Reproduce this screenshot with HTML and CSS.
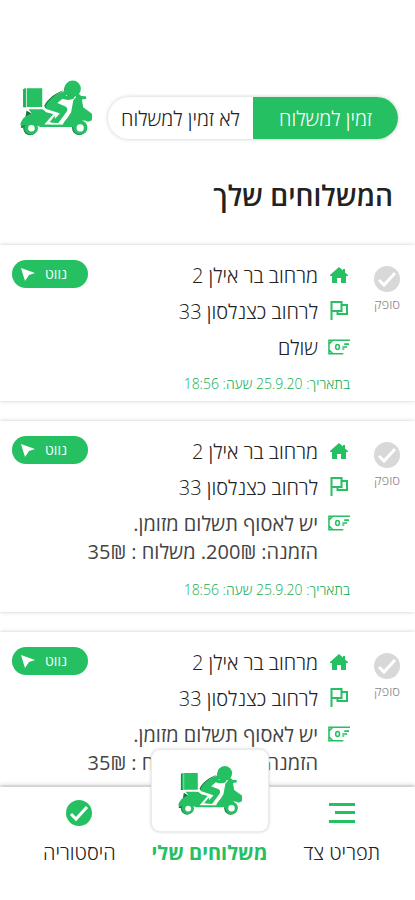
FILE: index.html
```html
<!DOCTYPE html>
<html lang="he" dir="rtl">
<head>
<meta charset="utf-8">
<meta name="viewport" content="width=device-width, initial-scale=1">
<title>המשלוחים שלך</title>
<link rel="stylesheet" href="styles.css">
</head>
<body>
<svg class="sprite" aria-hidden="true">
  <symbol id="scooter" viewBox="54 40 220 172">
    <g class="scooter-shadow">
      <path d="M64 68h8v56h-8zM74 134l15 9-26 22-7 21h9z"/>
      <path d="M188 72c-24 8-48 24-60 47l4 9 30-40z"/>
      <circle cx="212" cy="69" r="23"/><circle cx="85" cy="188" r="21"/><circle cx="235" cy="187" r="22"/>
    </g>
    <path d="M67 66h6v56h-6zM75 66h47v57H75z"/>
    <circle cx="215" cy="67" r="25"/>
    <path d="M80 130h44l10 9 24 6 4 16-16 15h38l26-36 7-38 8-9-2-10 8-3 10 9 14 1 2 8-14 2 4 24 28 20 5 17-18 7c-15-9-29-1-34 12l-7 4H116l-28-13-30 11-3-5c3-15 13-27 35-34z"/>
    <circle cx="88" cy="187" r="21"/><circle cx="238" cy="186" r="22"/>
    <g class="scooter-hole"><circle cx="89" cy="188" r="10"/><circle cx="238" cy="187" r="11"/></g>
    <path class="scooter-gap" d="M122 126l40 17-26 30h50"/>
    <path class="scooter-hole" d="M205 126l5 2-8 24-19 21h-11l25-31z"/>
    <path d="M193 73c-25 7-49 22-62 48l3 8 34 11 8 3-27 28 22 1 26-35c4-7 1-14-7-17l-22-9 16-13c12 5 25 4 36-2l-2-8-24 1 9-16z"/>
  </symbol>
  <symbol id="check" viewBox="0 0 26 26">
    <circle cx="13" cy="13" r="13"/>
    <path class="check-mark" d="M5 14l5 5 11-12"/>
  </symbol>
  <symbol id="home" viewBox="0 0 18 16">
    <path d="M9 0l4 3.500V2h2v3.500L18 8v1h-2v7h-5v-5H7v5H2V9H0V8z"/>
  </symbol>
  <symbol id="flag" viewBox="0 0 18 19">
    <path class="line" d="M1.500 19V1h10v9h-10M12 4h5v9H7.500v-3"/>
  </symbol>
  <symbol id="cash" viewBox="0 0 23 16">
    <path class="line thin" d="M23 1H1v14h15M1 5l4-4M1 11l4 4M17 5h5M15 8h5M15 10h2"/>
    <ellipse class="line thin" cx="10" cy="8" rx="2" ry="2.500"/>
  </symbol>
  <symbol id="pointer" viewBox="0 0 15 15">
    <path d="M0 1l14 5-6 2-4 6z"/>
  </symbol>
  <symbol id="menu" viewBox="0 0 26 20">
    <path d="M0 0h26v3H0zM6 8h20v3H6zM0 17h26v3H0z"/>
  </symbol>
</svg>

<div class="app">
  <header class="top">
    <div class="toggle" role="radiogroup" aria-label="זמינות">
      <label class="option"><input type="radio" name="available" checked><span>זמין למשלוח</span></label>
      <label class="option"><input type="radio" name="available"><span>לא זמין למשלוח</span></label>
    </div>
    <svg class="logo" aria-hidden="true"><use href="#scooter"/></svg>
  </header>

  <main class="content">
    <h1>המשלוחים שלך</h1>

    <article class="card">
      <button class="status" type="button"><svg aria-hidden="true"><use href="#check"/></svg>סופק</button>
      <div class="details">
        <div class="row"><svg class="home" aria-hidden="true"><use href="#home"/></svg><p>מרחוב בר אילן 2</p></div>
        <div class="row"><svg class="flag" aria-hidden="true"><use href="#flag"/></svg><p>לרחוב כצנלסון 33</p></div>
        <div class="row"><svg class="cash" aria-hidden="true"><use href="#cash"/></svg><p>שולם</p></div>
        <p class="date">בתאריך: 25.9.20 שעה: 18:56</p>
      </div>
      <button class="navigate" type="button">נווט<svg aria-hidden="true"><use href="#pointer"/></svg></button>
    </article>

    <article class="card unpaid">
      <button class="status" type="button"><svg aria-hidden="true"><use href="#check"/></svg>סופק</button>
      <div class="details">
        <div class="row"><svg class="home" aria-hidden="true"><use href="#home"/></svg><p>מרחוב בר אילן 2</p></div>
        <div class="row"><svg class="flag" aria-hidden="true"><use href="#flag"/></svg><p>לרחוב כצנלסון 33</p></div>
        <div class="row"><svg class="cash" aria-hidden="true"><use href="#cash"/></svg><p class="payment">יש לאסוף תשלום מזומן.<br>הזמנה: <bdi dir="ltr">200₪</bdi>. משלוח : <bdi dir="ltr">35₪</bdi></p></div>
        <p class="date">בתאריך: 25.9.20 שעה: 18:56</p>
      </div>
      <button class="navigate" type="button">נווט<svg aria-hidden="true"><use href="#pointer"/></svg></button>
    </article>

    <article class="card unpaid">
      <button class="status" type="button"><svg aria-hidden="true"><use href="#check"/></svg>סופק</button>
      <div class="details">
        <div class="row"><svg class="home" aria-hidden="true"><use href="#home"/></svg><p>מרחוב בר אילן 2</p></div>
        <div class="row"><svg class="flag" aria-hidden="true"><use href="#flag"/></svg><p>לרחוב כצנלסון 33</p></div>
        <div class="row"><svg class="cash" aria-hidden="true"><use href="#cash"/></svg><p class="payment">יש לאסוף תשלום מזומן.<br>הזמנה: <bdi dir="ltr">200₪</bdi>. משלוח : <bdi dir="ltr">35₪</bdi></p></div>
      </div>
      <button class="navigate" type="button">נווט<svg aria-hidden="true"><use href="#pointer"/></svg></button>
    </article>
  </main>

  <nav class="tabs">
    <a href="#menu-panel"><svg class="tab-menu" aria-hidden="true"><use href="#menu"/></svg><span>תפריט צד</span></a>
    <a class="current" href="#deliveries" aria-current="page"><span class="tile"><svg aria-hidden="true"><use href="#scooter"/></svg></span><span>משלוחים שלי</span></a>
    <a href="#history"><svg class="tab-check" aria-hidden="true"><use href="#check"/></svg><span>היסטוריה</span></a>
  </nav>
</div>
</body>
</html>
```
FILE: styles.css
```css
:root {
  --green: #25c062;
  --ink: #222;
  --edge: #ececec;
}

* { box-sizing: border-box; }

body {
  margin: 0;
  background: #fff;
  color: var(--ink);
  font: 300 20px/28px "Open Sans", "Noto Sans", sans-serif;
}

h1, p { margin: 0; }

button {
  border: 0;
  padding: 0;
  background: none;
  font: inherit;
}

svg {
  display: block;
  flex: none;
  fill: currentColor;
}

.sprite { position: absolute; width: 0; height: 0; }
.line { fill: none; stroke: currentColor; stroke-width: 2; }
.thin { stroke-width: 1.6; }
.check-mark { fill: none; stroke: #fff; stroke-width: 3; }
.scooter-shadow { fill: #17753d; }
.scooter-hole { fill: #fff; }
.scooter-gap { fill: none; stroke: #fff; stroke-width: 7; }

.app {
  display: flex;
  flex-direction: column;
  height: 100vh;
  overflow: hidden;
}

.top {
  display: flex;
  align-items: flex-end;
  justify-content: space-between;
  gap: 16px;
  padding: 79px 17px 0 20px;
}

.logo { width: 72px; height: 58px; color: var(--green); }

.toggle {
  display: flex;
  flex: 1;
  height: 42px;
  margin-bottom: -2px;
  border-radius: 21px;
  overflow: hidden;
  box-shadow: 0 0 4px #ccc;
}

.option {
  flex: 1;
  display: flex;
  align-items: center;
  justify-content: center;
  padding-top: 2px;
  white-space: nowrap;
}

.option input { position: absolute; opacity: 0; }
.option:has(:checked) { background: var(--green); color: #fff; }

.content {
  flex: 1;
  min-height: 0;
  overflow: hidden;
  display: flex;
  flex-direction: column;
  gap: 20px;
  padding-top: 40px;
}

h1 {
  padding: 0 22px;
  margin-bottom: 12px;
  font-size: 28px;
  line-height: 36px;
  font-weight: 600;
}

.card {
  flex: none;
  display: flex;
  align-items: flex-start;
  gap: 23px;
  padding: 15px 14px 3px 12px;
  box-shadow: 0 0 4px #ccc;
}

.unpaid { padding-bottom: 8px; }
.unpaid .date { padding-top: 2px; }

.status {
  width: 28px;
  padding-top: 6px;
  display: flex;
  flex-direction: column;
  align-items: center;
  font-size: 13px;
  line-height: 24px;
  color: #888;
}

.status svg { width: 26px; height: 26px; color: #d8d8d8; }

.details {
  flex: 1;
  display: flex;
  flex-direction: column;
  gap: 8px;
  padding-top: 2px;
  white-space: nowrap;
}

.row { display: grid; grid-template-columns: 22px 1fr; column-gap: 10px; }
.row svg { justify-self: center; margin-top: 5px; color: var(--green); }
.row .home { width: 18px; height: 16px; }
.row .flag { width: 18px; height: 19px; margin-top: 3px; }
.row .cash { width: 22px; height: 16px; }

.payment { font-weight: 400; color: #444; }

.date { font-size: 14px; color: #14ad50; }

.navigate {
  display: flex;
  align-items: center;
  justify-content: space-between;
  flex: none;
  width: 76px;
  height: 28px;
  padding: 0 21px 0 9px;
  margin-right: -80px;
  border-radius: 14px;
  background: var(--green);
  color: #fff;
  font-size: 14px;
  font-weight: 400;
}

.navigate svg { width: 15px; height: 15px; }

.tabs {
  position: relative;
  flex: none;
  display: flex;
  justify-content: space-between;
  height: 113px;
  padding: 0 35px 33px 43px;
  background: #fff;
  box-shadow: 0 0 6px #aaa;
}

.tabs a {
  display: flex;
  flex-direction: column;
  align-items: center;
  justify-content: flex-end;
  gap: 13px;
  color: var(--ink);
  text-decoration: none;
  white-space: nowrap;
}

.tabs svg { color: var(--green); }
.tab-menu { width: 26px; height: 20px; margin-bottom: 3px; }
.tab-check { width: 26px; height: 26px; }

.tabs .current { gap: 7px; color: var(--green); font-weight: 700; }

.tile {
  display: flex;
  flex: none;
  align-items: center;
  justify-content: center;
  width: 118px;
  height: 83px;
  border: 1px solid var(--edge);
  border-radius: 9px;
  background: #fff;
  box-shadow: 0 0 3px #ccc;
}

.tile svg { width: 64px; height: 51px; }
```
